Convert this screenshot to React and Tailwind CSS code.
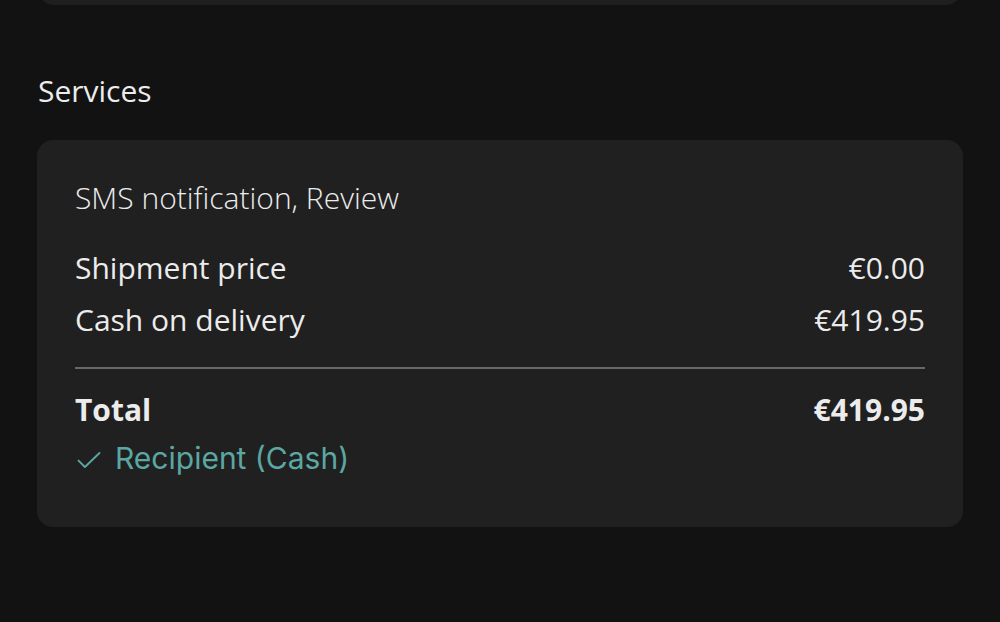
export default function App() {
  const rows = [
    { label: "Shipment price", value: "€0.00" },
    { label: "Cash on delivery", value: "€419.95" },
  ];

  return (
    <div
      className="h-[622px] w-full overflow-hidden bg-[#121212] text-[#ececec]"
      style={{ fontFamily: '"Open Sans", sans-serif' }}
    >
      {/* previous card, cut off at the top */}
      <div className="mx-[38px] -mt-[40px] h-[45px] rounded-[16px] bg-[#1f1f1f]" />

      <h2 className="mt-[66px] pl-[38px] text-[30px] leading-[40px] font-normal">Services</h2>

      <div className="mx-[37px] mt-[29px] rounded-[16px] bg-[#202020] px-[38px] pt-[36px] pb-[49px]">
        <p className="text-[30px] leading-[44px] font-light">SMS notification, Review</p>

        <div className="mt-[28px] space-y-[12px]">
          {rows.map((r) => (
            <div key={r.label} className="flex justify-between text-[30px] leading-[40px]">
              <span>{r.label}</span>
              <span>{r.value}</span>
            </div>
          ))}
        </div>

        <div className="mt-[27px] h-[2px] bg-[#686868]" />

        <div className="mt-[21px] flex justify-between text-[30px] leading-[40px] font-bold">
          <span>Total</span>
          <span>€419.95</span>
        </div>

        <div
          className="mt-[8px] flex items-center gap-[12px] text-[#5ba7a3] text-[30px] leading-[40px]"
          style={{ fontFamily: "Inter, sans-serif" }}
        >
          <svg width="28" height="28" viewBox="0 0 24 24" fill="none" stroke="currentColor" strokeWidth="1.6" strokeLinecap="round" strokeLinejoin="round" className="mt-[4px]">
            <path d="M3 12.5l5.5 5.5L21 6" />
          </svg>
          <span>Recipient (Cash)</span>
        </div>
      </div>
    </div>
  );
}
